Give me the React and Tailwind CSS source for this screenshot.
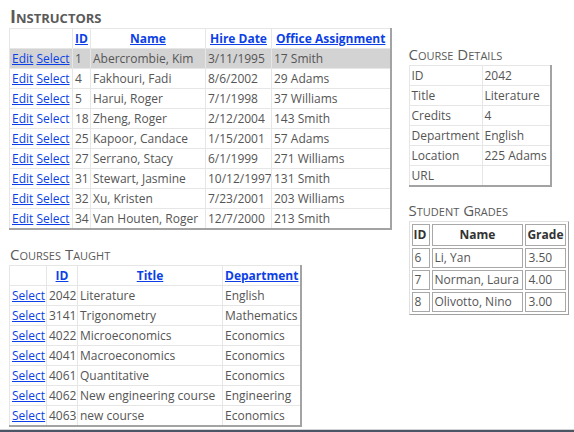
import React from 'react';

const instructors = [
  ['1', 'Abercrombie, Kim', '3/11/1995', '17 Smith'],
  ['4', 'Fakhouri, Fadi', '8/6/2002', '29 Adams'],
  ['5', 'Harui, Roger', '7/1/1998', '37 Williams'],
  ['18', 'Zheng, Roger', '2/12/2004', '143 Smith'],
  ['25', 'Kapoor, Candace', '1/15/2001', '57 Adams'],
  ['27', 'Serrano, Stacy', '6/1/1999', '271 Williams'],
  ['31', 'Stewart, Jasmine', '10/12/1997', '131 Smith'],
  ['32', 'Xu, Kristen', '7/23/2001', '203 Williams'],
  ['34', 'Van Houten, Roger', '12/7/2000', '213 Smith'],
];

const courses = [
  ['2042', 'Literature', 'English'],
  ['3141', 'Trigonometry', 'Mathematics'],
  ['4022', 'Microeconomics', 'Economics'],
  ['4041', 'Macroeconomics', 'Economics'],
  ['4061', 'Quantitative', 'Economics'],
  ['4062', 'New engineering course', 'Engineering'],
  ['4063', 'new course', 'Economics'],
];

const details = [
  ['ID', '2042'],
  ['Title', 'Literature'],
  ['Credits', '4'],
  ['Department', 'English'],
  ['Location', '225 Adams'],
  ['URL', ''],
];

const grades = [
  ['6', 'Li, Yan', '3.50'],
  ['7', 'Norman, Laura', '4.00'],
  ['8', 'Olivotto, Nino', '3.00'],
];

const td = 'h-[19px] p-0 px-[2px] border border-[#e6e6e6] whitespace-nowrap overflow-hidden leading-[19px]';
const link = 'text-[#0c3fe6] underline';
const gth = 'h-[22px] p-0 px-[1px] border border-[#a8a8a8] text-[#333] font-bold leading-[16px]';
const gtd = 'h-[20px] p-0 px-[2px] border border-[#a8a8a8] whitespace-nowrap leading-[16px]';

function Heading({ children, className }) {
  return (
    <h2 className={'[font-variant:small-caps] text-[#5a5a5a] leading-none ' + className}>{children}</h2>
  );
}

export default function App() {
  return (
    <div className="h-[432px] flex flex-col bg-white text-[12px] text-[#555] font-['Open_Sans',sans-serif] overflow-hidden">
      <div className="flex-1 flex pl-[9px]">
        {/* left column */}
        <div className="flex flex-col">
          <Heading className="text-[18px] font-bold mt-[7px] ml-[1px] mb-[3px]">Instructors</Heading>
          <table className="table-fixed border-collapse w-[381px] border-r-2 border-b-2 border-[#a3a3a3]">
            <colgroup>
              <col className="w-[63px]" />
              <col className="w-[18px]" />
              <col className="w-[115px]" />
              <col className="w-[66px]" />
              <col className="w-[119px]" />
            </colgroup>
            <thead>
              <tr>
                <th className={td}></th>
                <th className={td}><a className={link + ' font-bold'}>ID</a></th>
                <th className={td}><a className={link + ' font-bold'}>Name</a></th>
                <th className={td}><a className={link + ' font-bold'}>Hire Date</a></th>
                <th className={td}><a className={link + ' font-bold'}>Office Assignment</a></th>
              </tr>
            </thead>
            <tbody>
              {instructors.map((r, i) => (
                <tr key={r[0]} className={i === 0 ? 'bg-[#d3d3d3]' : ''}>
                  <td className={td}>
                    <a className={link}>Edit</a>{' '}
                    <a className={i === 3 ? 'text-[#0c3fe6]' : link}>Select</a>
                  </td>
                  <td className={td}>{r[0]}</td>
                  <td className={td}>{r[1]}</td>
                  <td className={td}>{r[2]}</td>
                  <td className={td}>{r[3]}</td>
                </tr>
              ))}
            </tbody>
          </table>

          <Heading className="text-[15px] mt-[17px] ml-[1px] mb-[3px]">Courses Taught</Heading>
          <table className="table-fixed border-collapse w-[291px] border-r-2 border-b-2 border-[#a3a3a3]">
            <colgroup>
              <col className="w-[37px]" />
              <col className="w-[31px]" />
              <col className="w-[145px]" />
              <col className="w-[78px]" />
            </colgroup>
            <thead>
              <tr>
                <th className={td}></th>
                <th className={td}><a className={link + ' font-bold'}>ID</a></th>
                <th className={td}><a className={link + ' font-bold'}>Title</a></th>
                <th className={td}><a className={link + ' font-bold'}>Department</a></th>
              </tr>
            </thead>
            <tbody>
              {courses.map((r) => (
                <tr key={r[0]}>
                  <td className={td}><a className={link}>Select</a></td>
                  <td className={td}>{r[0]}</td>
                  <td className={td}>{r[1]}</td>
                  <td className={td}>{r[2]}</td>
                </tr>
              ))}
            </tbody>
          </table>
        </div>

        {/* right column */}
        <div className="flex flex-col ml-[17px]">
          <Heading className="text-[15px] mt-[47px] mb-[3px]">Course Details</Heading>
          <table className="table-fixed border-collapse w-[142px] border-r-2 border-b-2 border-[#a3a3a3]">
            <colgroup>
              <col className="w-[73px]" />
              <col className="w-[69px]" />
            </colgroup>
            <tbody>
              {details.map((r) => (
                <tr key={r[0]}>
                  <td className={td}>{r[0]}</td>
                  <td className={td}>{r[1]}</td>
                </tr>
              ))}
            </tbody>
          </table>

          <Heading className="text-[15px] mt-[16px] mb-[3px]">Student Grades</Heading>
          <table className="border-separate border-spacing-[2px] w-[160px] border border-t-[#e0e0e0] border-l-[#e0e0e0] border-r-[#a0a0a0] border-b-[#a0a0a0]">
            <thead>
              <tr>
                <th className={gth + ' text-left w-[18px]'}>ID</th>
                <th className={gth + ' text-center'}>Name</th>
                <th className={gth + ' text-left w-[40px]'}>Grade</th>
              </tr>
            </thead>
            <tbody>
              {grades.map((r) => (
                <tr key={r[0]}>
                  <td className={gtd}>{r[0]}</td>
                  <td className={gtd}>{r[1]}</td>
                  <td className={gtd}>{r[2]}</td>
                </tr>
              ))}
            </tbody>
          </table>
        </div>
      </div>
      <div className="h-px bg-[#d4d4d4]" />
      <div className="h-[2px] bg-[#4a5666]" />
    </div>
  );
}
